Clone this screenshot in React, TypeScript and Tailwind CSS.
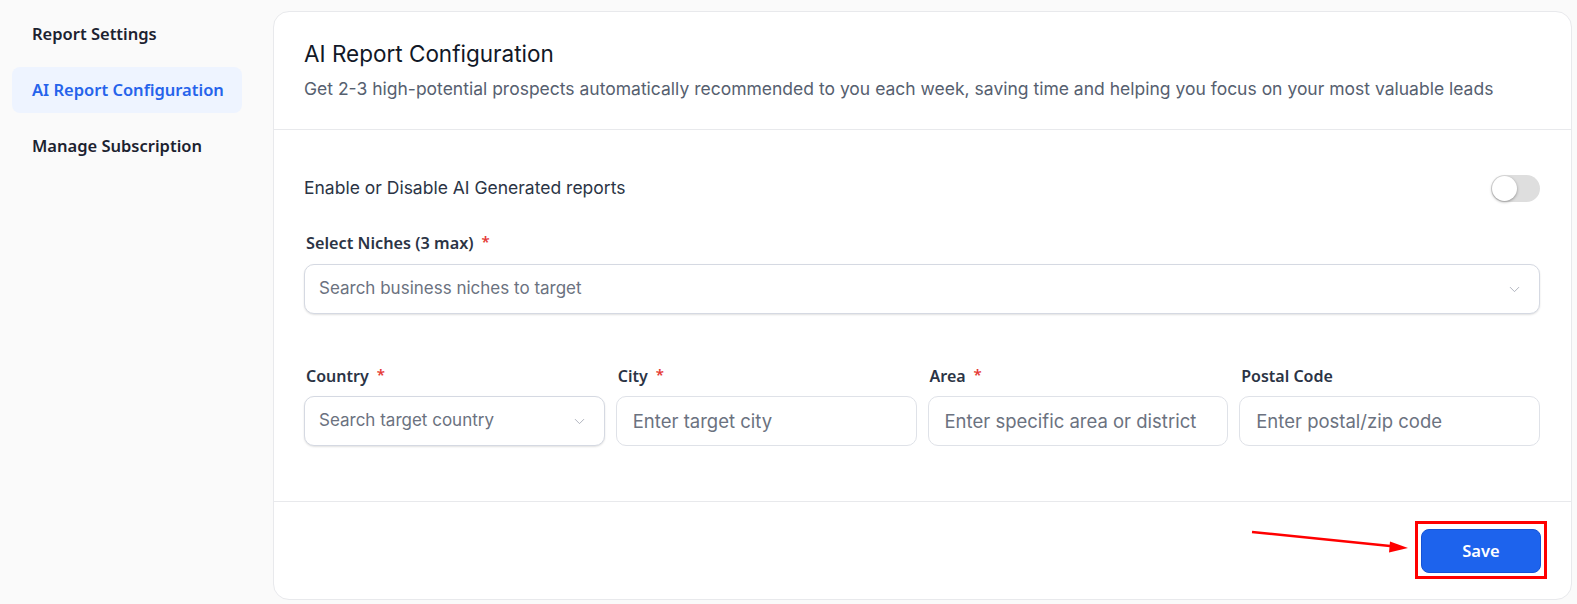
import React, { useState } from "react";
import { ChevronDown } from "lucide-react";

const label = "font-semibold text-[#2b3445] [font-family:'Noto_Sans',sans-serif]";
const inputBox =
  "h-[50px] w-full rounded-[10px] border border-[#dfe2e8] bg-white px-4 text-[18.5px] text-[#1f2937] placeholder:text-[#6b7280] outline-none [font-family:Inter,sans-serif]";

function Req() {
  return <span className="ml-2 relative -top-[2px] text-[15px] text-[#e53935]">*</span>;
}

function Field({ title, required, placeholder, select }: { title: string; required?: boolean; placeholder: string; select?: boolean }) {
  return (
    <div className="flex flex-col gap-[8px]">
      <div className={`${label} text-[16px] h-[24px] leading-[24px] pl-[2px]`}>
        {title}
        {required && <Req />}
      </div>
      {select ? (
        <div className="flex h-[50px] items-center justify-between rounded-[10px] border border-[#d5d9e2] bg-white pl-[14px] pr-4 shadow-[0_1px_2px_rgba(0,0,0,0.12)]">
          <span className="text-[17px] text-[#6b7280] [font-family:Inter,sans-serif]">{placeholder}</span>
          <ChevronDown size={17} strokeWidth={1.2} className="text-[#a3a8b3]" />
        </div>
      ) : (
        <input className={inputBox} placeholder={placeholder} />
      )}
    </div>
  );
}

export default function App() {
  const [enabled, setEnabled] = useState(false);
  const items = ["Report Settings", "AI Report Configuration", "Manage Subscription"];

  return (
    <div className="flex h-[604px] w-full bg-[#fafafa] pt-[11px] pb-[4px] pr-[5px] overflow-hidden">
      {/* Sidebar */}
      <aside className="flex w-[273px] shrink-0 flex-col gap-[10px] pl-3 pr-[31px] [font-family:'Noto_Sans',sans-serif]">
        {items.map((it) => (
          <div
            key={it}
            className={`flex h-[46px] items-center whitespace-nowrap rounded-lg px-5 text-[16.5px] font-semibold ${
              it === "AI Report Configuration" ? "bg-[#eef4ff] text-[#2563eb]" : "text-[#1c2230]"
            }`}
          >
            {it}
          </div>
        ))}
      </aside>

      {/* Card */}
      <main className="relative flex flex-1 flex-col rounded-2xl border border-[#e8e9ec] bg-white [font-family:Inter,sans-serif]">
        <div className="border-b border-[#e8e9ec] pl-[30px] pr-[32px] pt-[27px] pb-[27px]">
          <h1 className="text-[22.5px] leading-[30px] text-[#111827]">AI Report Configuration</h1>
          <p className="mt-[7px] text-[17.5px] leading-[26px] text-[#56606f]">
            Get 2-3 high-potential prospects automatically recommended to you each week, saving time and helping you focus on your most valuable leads
          </p>
        </div>

        <div className="border-b border-[#e8e9ec] pl-[30px] pr-[31px] pt-[44px] pb-[55px]">
          <div className="flex h-[28px] items-center justify-between">
            <span className="text-[17.5px] text-[#2b3445]">Enable or Disable AI Generated reports</span>
            <button
              onClick={() => setEnabled(!enabled)}
              className={`relative h-[27px] w-[49px] rounded-full ${enabled ? "bg-[#1d63ed]" : "bg-[#dedede]"}`}
            >
              <span
                className={`absolute top-[1px] h-[25px] w-[25px] rounded-full bg-white shadow-[0_1px_3px_rgba(0,0,0,0.35)] ${
                  enabled ? "left-[23px]" : "left-[1px]"
                }`}
              />
            </button>
          </div>

          <div className="mt-[29px] flex flex-col gap-[9px]">
            <div className={`${label} text-[16.25px] h-[24px] leading-[24px] pl-[2px]`}>
              Select Niches (3 max)
              <Req />
            </div>
            <div className="flex h-[50px] items-center justify-between rounded-[10px] border border-[#d5d9e2] bg-white pl-[14px] pr-4 shadow-[0_1px_2px_rgba(0,0,0,0.12)]">
              <span className="text-[17px] text-[#6b7280]">Search business niches to target</span>
              <ChevronDown size={17} strokeWidth={1.2} className="text-[#a3a8b3]" />
            </div>
          </div>

          <div className="mt-[50px] grid grid-cols-4 gap-[11px]">
            <Field title="Country" required placeholder="Search target country" select />
            <Field title="City" required placeholder="Enter target city" />
            <Field title="Area" required placeholder="Enter specific area or district" />
            <Field title="Postal Code" placeholder="Enter postal/zip code" />
          </div>
        </div>

        <div className="flex justify-end pl-[30px] pr-[30px] pt-[27px]">
          <button className="h-[44px] w-[120px] rounded-lg border border-[#1553d6] bg-[#1d63ed] text-[16.5px] font-semibold text-white [font-family:'Noto_Sans',sans-serif]">
            Save
          </button>
        </div>

        {/* annotation */}
        <div className="pointer-events-none absolute left-[1141px] top-[509px] h-[58px] w-[132px] border-[3px] border-[#ff0000]" />
        <svg className="pointer-events-none absolute left-[971px] top-[513px]" width="170" height="35" viewBox="0 0 170 35">
          <line x1="7" y1="7" x2="150" y2="21.5" stroke="#ff0000" strokeWidth="2.5" />
          <polygon points="163,23 145,16.5 144,27.5" fill="#ff0000" />
        </svg>
      </main>
    </div>
  );
}
